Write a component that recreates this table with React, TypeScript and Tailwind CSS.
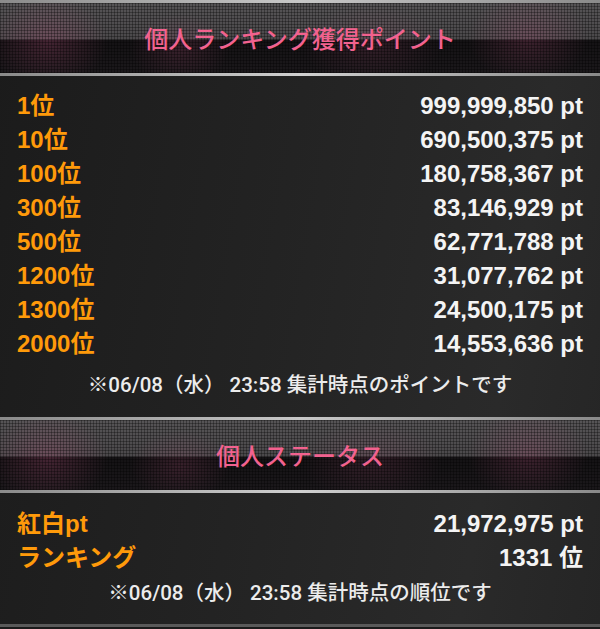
import React from "react";

const ranks: [string, string][] = [
  ["1位", "999,999,850 pt"],
  ["10位", "690,500,375 pt"],
  ["100位", "180,758,367 pt"],
  ["300位", "83,146,929 pt"],
  ["500位", "62,771,788 pt"],
  ["1200位", "31,077,762 pt"],
  ["1300位", "24,500,175 pt"],
  ["2000位", "14,553,636 pt"],
];

function Header({ title }: { title: string }) {
  return (
    <div className="flex flex-col">
      <div className="h-[3px] bg-[linear-gradient(90deg,#8a8a8a,#c8c8c8_50%,#8a8a8a)]" />
      <div className="h-[70px] bg-[linear-gradient(180deg,#565456_0%,#4a484a_52%,#141214_53%,#1b181b_100%)]">
        <div className="h-full bg-[radial-gradient(ellipse_60px_45px_at_8%_55%,rgba(210,90,140,0.25),transparent),radial-gradient(ellipse_50px_35px_at_30%_65%,rgba(210,90,140,0.18),transparent),radial-gradient(ellipse_70px_40px_at_62%_60%,rgba(210,90,140,0.15),transparent),radial-gradient(ellipse_60px_45px_at_88%_50%,rgba(210,90,140,0.22),transparent)]">
          <div className="h-full flex items-center justify-center bg-[linear-gradient(90deg,rgba(0,0,0,0.3)_1px,transparent_1px),linear-gradient(180deg,rgba(0,0,0,0.3)_1px,transparent_1px)] bg-[length:3px_3px]">
            <span className="text-[24px] leading-none font-medium text-[#f2628f] [font-family:'Noto_Sans_CJK_JP',sans-serif]">
              {title}
            </span>
          </div>
        </div>
      </div>
      <div className="h-[3px] bg-[linear-gradient(90deg,#8a8a8a,#d0d0d0_50%,#8a8a8a)]" />
    </div>
  );
}

function Row({ label, value }: { label: string; value: string }) {
  return (
    <div className="h-[34px] flex items-center justify-between px-[17px] text-[24px] font-bold leading-none [font-family:'Liberation_Sans','Noto_Sans_CJK_JP',sans-serif]">
      <span className="text-[#ff9a0a]">{label}</span>
      <span className="text-[#f4f4f4]">{value}</span>
    </div>
  );
}

function Note({ text }: { text: string }) {
  return (
    <div className="h-[24px] flex items-center justify-center text-[20.5px] font-medium text-[#ececec] leading-none [font-family:Roboto,'Noto_Sans_CJK_JP',sans-serif]">
      {text}
    </div>
  );
}

export default function App() {
  return (
    <div className="w-[600px] h-[629px] overflow-hidden flex flex-col bg-[linear-gradient(100deg,#1b1b1b_0%,#232323_45%,#2a2a2a_80%,#252525_100%)]">
      <Header title="個人ランキング獲得ポイント" />
      <div className="pt-[13px] pb-[20px] flex flex-col">
        {ranks.map(([l, v]) => (
          <Row key={l} label={l} value={v} />
        ))}
        <div className="mt-[12px]">
          <Note text="※06/08（水） 23:58 集計時点のポイントです" />
        </div>
      </div>
      <Header title="個人ステータス" />
      <div className="pt-[14px] flex flex-col h-[131px]">
        <Row label="紅白pt" value="21,972,975 pt" />
        <Row label="ランキング" value="1331 位" />
        <div className="mt-[6px]">
          <Note text="※06/08（水） 23:58 集計時点の順位です" />
        </div>
      </div>
      <div className="h-[3px] bg-[#5a5a5a]" />
      <div className="flex-1 bg-[#1a1a1a]" />
    </div>
  );
}
